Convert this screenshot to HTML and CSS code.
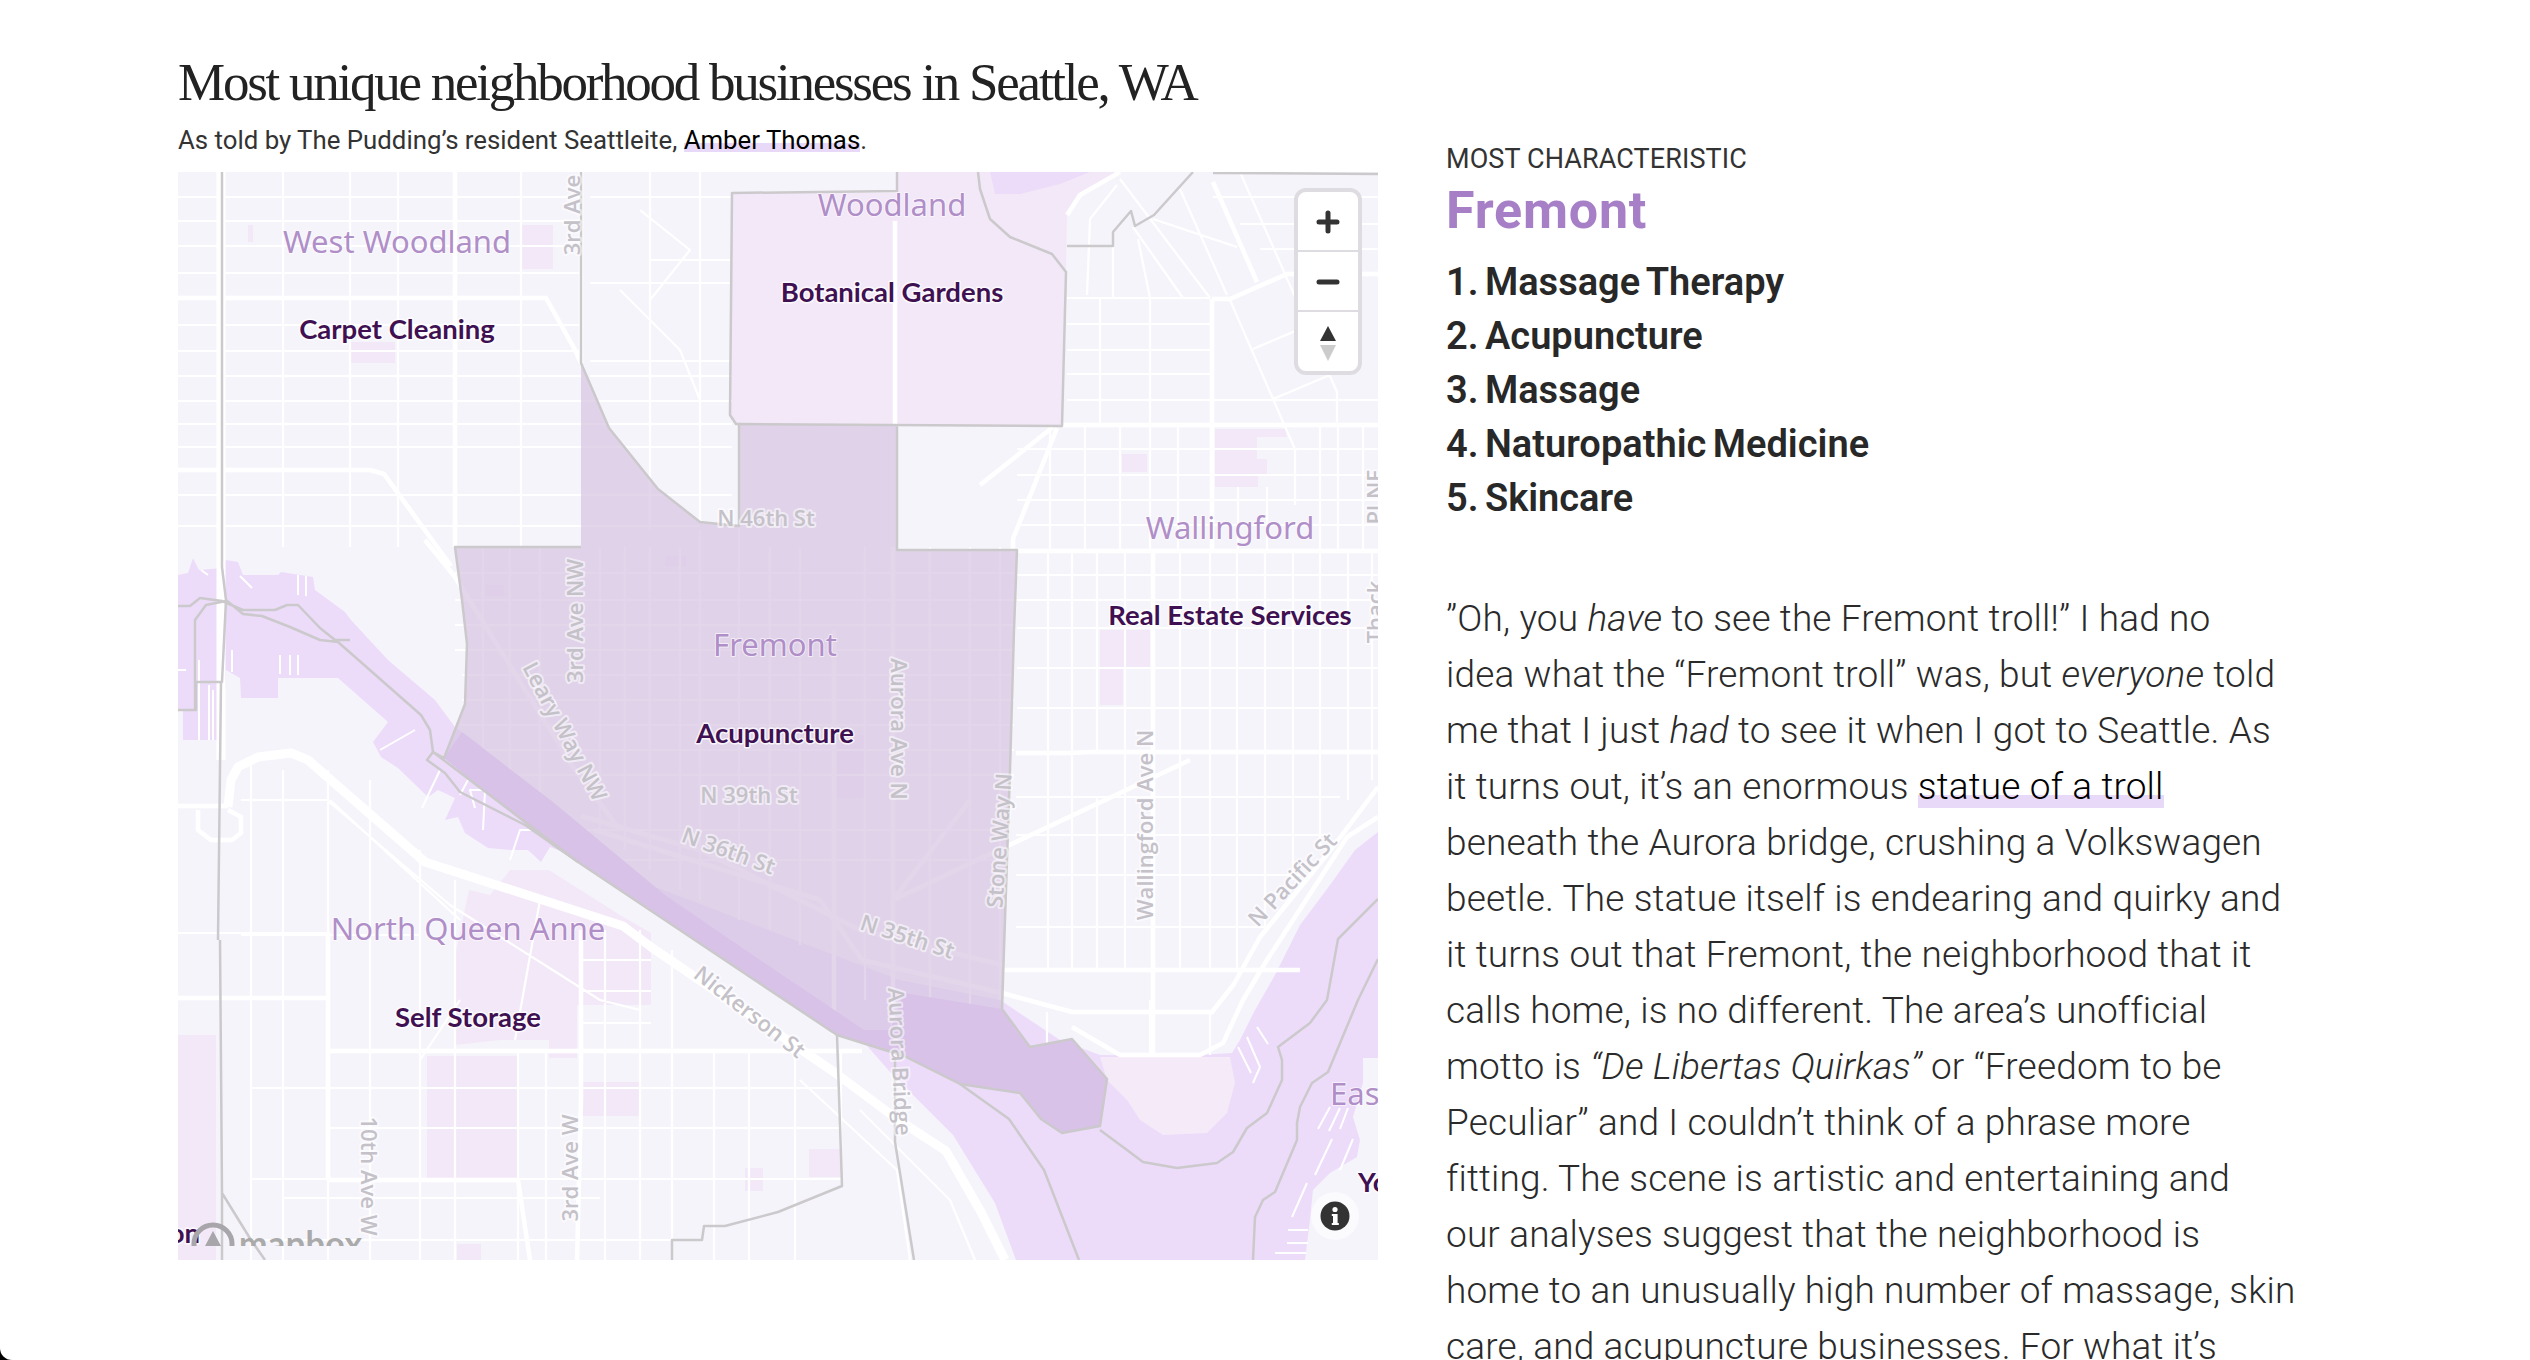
FILE: index.html
```html
<!DOCTYPE html>
<html>
	<head>
		<title>Most unique neighborhood businesses in Seattle, WA</title>
		<meta charset="utf-8"/>
		<link rel="stylesheet" href="styles.css">
	</head>
	<body>
		<div class="page">
			<div class="chart">
				<h1 class="chartTitle">Most unique neighborhood businesses in Seattle, WA</h1>
				<p class="chartSub">As told by The Pudding’s resident Seattleite, <a href="#">Amber Thomas</a>.</p>
				<div class="map">
					<!-- viewBox uses page coordinates so it is easy to check against the screenshot -->
					<svg class="mapArt" viewBox="178 172 1200 1088" width="1200" height="1088">
						<rect class="land" x="178" y="172" width="1200" height="1088"/>

						<!-- parks and green blocks -->
						<path class="park" d="M732 193H897V172H1120L1080 195L1067 215L1066 272L1062 425H736L730 415Z"/>
						<path class="park" d="M520 225h33v44h-33zM351 342h44v21h-44zM248 225h5v17h-5zM1122 454h25v18h-25zM1100 630h50v37h-50zM1100 667h23v38h-23zM427 1056h91v123h-91zM581 1082h60v34h-60zM745 1168h18v23h-18zM809 1149h32v28h-32zM457 1244h24v16h-24zM665 556h21v10h-21zM486 585h18v11h-18zM837 735h28v63h-28z"/>
						<path class="park" d="M1215 429H1285L1287 437H1257V459H1267V475H1258V487H1215Z"/>
						<path class="park" d="M469 890L490 895L510 870H549L620 915L651 933V1005H577V1058H549V1040H500L455 1045V956Z"/>
						<path class="park" d="M178 1035H216V1260H178Z"/>

						<!-- water -->
						<path class="water" d="M990 172H1090L1060 184L1020 194L995 194Z"/>
						<path class="water" d="M178 575L188 573L193 558L199 570L223 568L226 560L238 562L243 575H278L281 572L313 577L315 590L345 612L351 620L388 660L435 700L455 727L480 745L560 830L840 1030L862 1040L890 1072L953 1135L995 1203L1016 1260H1305L1310 1220L1313 1190L1330 1173L1357 1157L1360 1140L1353 1117L1363 1083V1058H1378V832L1355 850L1330 885L1300 925L1275 975L1255 1010L1240 1040L1232 1053L1180 1056L1100 1055L1060 1040L1000 1000L900 980L550 847L541 862L528 850H511L488 848L465 833L458 817L445 820L455 798L438 790L428 797L398 768L381 757L373 742L388 722L338 678H278V698H241L240 678L226 670L223 740H198L196 740H183V710H178Z"/>
						<path class="parkLight" d="M1100 1057H1230L1235 1083L1227 1113L1207 1133L1163 1135L1140 1120L1127 1100L1107 1080Z"/>

						<!-- street grid -->
						<path class="road" d="M178 197H581M178 221H581M178 246H581M178 273H581M178 325H581M178 351H581M178 376H581M178 401H732M178 424H732M178 447H732M178 495H732M178 526H700M590 197H732M650 260H732M590 283H732M590 361H732M590 376H732
							M283 172V547M350 172V547M398 172V547M521 172V547M650 172V530M700 172V522M640 210L690 250L650 300M620 290L680 350L700 400
							M1067 298H1210M1067 324H1212M1067 350H1212M1067 374H1212M1067 400H1378M1100 298V425M1150 298V425M1113 232V298M1090 219L1117 185M1090 219L1087 295M1133 227L1183 298M1138 239L1150 298M1120 179L1210 298M1180 189L1227 295M1240 172L1337 392V422M1230 300L1283 422L1295 449V505M1153 219L1237 247M1273 399L1330 375M1253 349L1300 329M1213 197H1378M1240 224H1378M1260 249H1378
							M1050 425V551M1085 425V551M1120 425V551M1150 425V551M1178 425V551M1238 487V551M1267 487V551M1320 425V551M1338 425V551M1363 425V551M1017 449H1378M1017 475H1378M1017 500H1378M1017 525H1378
							M1048 551V752M1072 551V752M1097 551V752M1125 551V752M1180 551V970M1210 551V970M1237 551V970M1265 551V930M1293 551V880M1320 551V850M1348 551V800M1372 551V780M1017 575H1378M1017 600H1378M1017 628H1378M1017 668H1378M1017 708H1378M1016 797H1340M1016 835H1330M1016 875H1300M1016 927H1270M1048 752V970M1072 752V970M1097 797V970M1125 752V970
							M483 547V780M510 547V800M540 547V820M600 547V830M625 547V850M650 547V870M680 547V890M700 530V900M739 526V920M770 547V930M800 547V945M865 547V1000M930 547V1060M970 547V1080M1000 547V1000M455 573H1014M455 600H1014M455 625H1014M455 650H1014M462 675H1014M462 700H1014M460 725H1014M480 750H1014M505 775H1014M545 830H1010M600 860H1005
							M251 760V1260M283 770V1260M328 770V1260M370 780V1260M420 850V1260M455 880V1260M518 1050V1260M546 1050V1260M605 930V1260M640 930V1260M672 950V1240M714 1051V1260M749 1051V1260M795 1051V1260M841 1051V1150M178 933H328M328 800H241M241 935H420M328 1128H841M251 1088H841M251 1179H841M283 1198H600M251 1240H700M581 960H651M581 991H651M581 1023H651
							M327 800L450 905L600 1000L640 1010M330 800L460 920M540 900L515 1040M460 1000L420 1060M1150 1000V1055M1047 1012V1055M1210 1012V1055"/>

						<!-- arterials -->
						<path class="artery" d="M178 298H546L574 348L581 363M581 172V363M455 172V547M178 470H370L384 474L451 566M1063 425H1378M980 485L1053 427M1013 552V539L1057 428M1017 551H1378M1212 299V551M1153 551V1055M1213 182L1257 282M1212 299H1230L1287 274H1378M1067 215L1080 195L1120 172M581 930V1100L577 1260M178 806H228M198 810V830L211 840H232L241 833V817L228 810M178 998H328M328 1051H862M328 932V1180M328 1180H518L530 1260M1016 753H1070L1090 752H1378M895 221V424"/>

						<path class="artery" d="M425 540L455 577L575 770L620 830M581 816L700 850L860 930L1002 965M595 830L820 900L862 960L1002 993M834 630V1035M893 547V1056M970 800L893 900M1190 760L893 900M1002 993L1072 1012H1212L1234 984L1260 937L1333 847L1378 787M1072 1027L1120 1055H1200L1223 1043L1243 1000L1267 960L1347 837L1378 817M1002 970H1300"/>

						<!-- highway -->
						<path class="highway" d="M221 172V760M228 807L231 780L238 767L258 757L291 753L308 760L425 862L623 926L651 947L834 1072L897 1119L946 1151L981 1212L1005 1260"/>
						<path class="road" d="M800 1080L897 1170L910 1260M860 1110L950 1200L975 1260"/>

						<!-- docks -->
						<path class="dock" d="M201 570L208 575M240 576L252 588M298 575V595M306 576V596M232 650V672M280 655V674M290 655V675M298 655V675M177 670H186M199 660V740M209 685V740M213 690V740M380 750L415 730M422 808L440 770M460 795L468 780M475 808L470 790H485L483 830M510 860L520 830L540 830M530 825L550 840M1257 1027L1268 1044M1247 1037L1260 1067L1253 1083M1238 1047L1251 1073M1330 1107L1318 1129M1340 1108L1329 1131M1348 1108L1340 1129M1332 1139L1315 1175M1353 1139L1340 1170M1307 1183L1292 1217M1288 1230H1308M1287 1243H1308M1275 1253H1306"/>

						<!-- fremont -->
						<path class="fremont" d="M739 424H897V550H1017L1014 630L1010 770L1002 1009L1030 1047L1072 1039L1107 1079L1100 1126L1062 1133L1041 1119L1020 1093L960 1084L904 1056L837 1035L553 846L444 758L455 730L465 704L467 644L462 600L455 547H581V363L609 428L658 489L700 522L739 526Z"/>
						<path class="fremontWater" d="M444 758L462 732L553 802L665 895L760 960L830 1007L864 1030L890 1030L904 993L1002 1009L1030 1047L1072 1039L1107 1079L1100 1126L1062 1133L1041 1119L1020 1093L960 1084L904 1056L837 1035L553 846Z"/>

						<!-- neighborhood boundaries -->
						<path class="edge" d="M897 172V191L732 193L730 415L736 424H739V526L700 522L658 489L609 428L581 363V172M739 424L1062 426L1066 272L1052 254L1010 237L990 219L980 189L978 172M1067 246H1113V232L1131 211L1135 226L1154 215L1193 172M1213 173L1378 174M897 426V550H1017L1014 630L1010 770L1002 1009L1030 1047L1072 1039L1107 1079L1100 1126L1062 1133L1041 1119L1020 1093L960 1084L904 1056L837 1035L578 862L433 752L444 758L455 730L465 704L467 644L462 600L455 547H581"/>
						<path class="edge" d="M222 172V567L226 600L222 682H196V710H178M221 682L218 940M220 940L222 1193V1260M222 1193L251 1240L265 1260M178 606H190L200 598L222 601L243 610H275L287 605H298L320 628L335 640H350M226 600L243 614L262 616L290 627L320 640L338 642L421 715L430 730L433 752L427 760L445 773L460 792L525 825L578 862M226 601L206 605L195 620V710"/>
						<path class="edge" d="M837 1035L842 1186L778 1212L725 1226H704L702 1240H672V1260M895 1058V1142L914 1260M960 1084L1009 1119L1044 1170L1079 1260M1100 1130L1127 1150L1143 1162L1177 1168L1217 1163L1233 1152L1247 1128L1267 1113L1282 1080V1060L1278 1047L1310 1023L1327 1000L1338 939L1378 899M1378 959L1358 1000L1328 1072L1312 1083L1300 1107L1297 1123V1140L1275 1192L1263 1200L1255 1217L1253 1260"/>

						<!-- street names -->
						<text class="street" transform="translate(580 215) rotate(-90)">3rd Ave</text>
						<text class="street" transform="translate(583 621) rotate(-90)">3rd Ave NW</text>
						<text class="street" transform="translate(558 735) rotate(62)">Leary Way NW</text>
						<text class="street" transform="translate(891 729) rotate(90)">Aurora Ave N</text>
						<text class="street" transform="translate(1007 841) rotate(-86)">Stone Way N</text>
						<text class="street" transform="translate(1153 825) rotate(-90)">Wallingford Ave N</text>
						<text class="street" transform="translate(1298 885) rotate(-47)">N Pacific St</text>
						<text class="street" x="766" y="526">N 46th St</text>
						<text class="street" x="749" y="803">N 39th St</text>
						<text class="street" transform="translate(726 858) rotate(20)">N 36th St</text>
						<text class="street" transform="translate(905 944) rotate(18)">N 35th St</text>
						<text class="street" transform="translate(745 1018) rotate(38)">Nickerson St</text>
						<text class="street" transform="translate(892 1062) rotate(87)">Aurora Bridge</text>
						<text class="street" transform="translate(578 1168) rotate(-90)">3rd Ave W</text>
						<text class="street" transform="translate(361 1176) rotate(90)">10th Ave W</text>
						<text class="street" transform="translate(1383 497) rotate(-90)">Pl NE</text>
						<text class="street" transform="translate(1383 612) rotate(-90)">Thack</text>

						<!-- neighborhood names -->
						<text class="hood" x="397" y="253">West Woodland</text>
						<text class="hood" x="892" y="216">Woodland</text>
						<text class="hood" x="1230" y="539">Wallingford</text>
						<text class="hood" x="775" y="656">Fremont</text>
						<text class="hood" x="468" y="940">North Queen Anne</text>
						<text class="hood hoodStart" x="1330" y="1105">Eastlake</text>

						<!-- top business per neighborhood -->
						<text class="biz" x="397" y="339">Carpet Cleaning</text>
						<text class="biz" x="892" y="302">Botanical Gardens</text>
						<text class="biz" x="1230" y="625">Real Estate Services</text>
						<text class="biz" x="775" y="743">Acupuncture</text>
						<text class="biz" x="468" y="1027">Self Storage</text>
						<text class="biz bizStart" x="1358" y="1192">Yoga</text>
						<text class="biz bizEnd" x="200" y="1243">Construction</text>
					</svg>

					<div class="mapControls">
						<button class="mapBtn" aria-label="Zoom in">
							<svg width="24" height="24" viewBox="0 0 24 24"><path class="ctrlStroke" d="M3 12H21M12 3V21"/></svg>
						</button>
						<button class="mapBtn" aria-label="Zoom out">
							<svg width="24" height="24" viewBox="0 0 24 24"><path class="ctrlStroke" d="M3 12H21"/></svg>
						</button>
						<button class="mapBtn" aria-label="Reset bearing">
							<svg width="16" height="36" viewBox="0 0 16 36"><path class="ctrlUp" d="M8 0L16 15H0Z"/><path class="ctrlDown" d="M0 19H16L8 35Z"/></svg>
						</button>
					</div>

					<div class="mapLogo">
						<svg width="44" height="44" viewBox="0 0 44 44"><circle class="logoRing" cx="22" cy="22" r="19"/><path class="logoArrow" d="M22 9L30 24H14Z"/></svg>
						<span class="logoWord">mapbox</span>
					</div>

					<div class="mapInfo">
						<svg width="30" height="30" viewBox="0 0 30 30"><circle class="infoDisc" cx="15" cy="15" r="14.5"/><circle class="infoMark" cx="15" cy="8.5" r="2.6"/><path class="infoMark" d="M11.8 13H17.6V22H18.8V24H11.8V22H13V15H11.8Z"/></svg>
					</div>
				</div>
			</div>

			<div class="story">
				<div class="storyLabel">MOST CHARACTERISTIC</div>
				<h2 class="storyName">Fremont</h2>
				<ol class="storyList">
					<li>1. Massage Therapy</li>
					<li>2. Acupuncture</li>
					<li>3. Massage</li>
					<li>4. Naturopathic Medicine</li>
					<li>5. Skincare</li>
				</ol>
				<p class="storyText">”Oh, you <em>have</em> to see the Fremont troll!” I had no<br>
					idea what the “Fremont troll” was, but <em>everyone</em> told<br>
					me that I just <em>had</em> to see it when I got to Seattle. As<br>
					it turns out, it’s an enormous <a href="#">statue of a troll</a><br>
					beneath the Aurora bridge, crushing a Volkswagen<br>
					beetle. The statue itself is endearing and quirky and<br>
					it turns out that Fremont, the neighborhood that it<br>
					calls home, is no different. The area’s unofficial<br>
					motto is <em>“De Libertas Quirkas”</em> or “Freedom to be<br>
					Peculiar” and I couldn’t think of a phrase more<br>
					fitting. The scene is artistic and entertaining and<br>
					our analyses suggest that the neighborhood is<br>
					home to an unusually high number of massage, skin<br>
					care, and acupuncture businesses. For what it’s</p>
			</div>
		</div>
	</body>
</html>
```

FILE: styles.css
```css
html { background:#000; }
body {
	margin:0;
	color:#2a2a2a;
	font-family:"Roboto", "Liberation Sans", sans-serif;
}
a { color:#000; text-decoration:none; }

.page {
	height:1360px;
	overflow:hidden;
	box-sizing:border-box;
	padding:47px 0 0 178px;
	background:#fff;
	border-bottom-left-radius:12px;
	display:flex;
	gap:68px;
	align-items:flex-start;
}

/* left column */
.chart { width:1200px; flex:none; }
.chartTitle {
	margin:0;
	font-family:"Liberation Serif", serif;
	font-weight:400;
	font-size:53px;
	line-height:70px;
	letter-spacing:-2.25px;
	color:#222;
	white-space:nowrap;
}
.chartSub {
	margin:6px 0 15px;
	font-size:25.8px;
	line-height:34px;
	font-weight:400;
	color:#333;
}
.chartSub a {
	background:linear-gradient(#e8d9f8,#e8d9f8) 0 calc(100% - 3px)/100% 9px no-repeat;
}

/* map */
.map { position:relative; width:1200px; height:1088px; overflow:hidden; }
.mapArt { display:block; }
.land { fill:#f6f4fb; }
.park { fill:#f3e8f8; }
.parkLight { fill:#f5eaf8; }
.water { fill:#ecdcfa; }
.road, .artery, .highway, .dock, .edge { fill:none; stroke-linejoin:round; }
.road { stroke:#fff; stroke-width:2.2; }
.artery { stroke:#fff; stroke-width:4.5; }
.highway { stroke:#fff; stroke-width:9; }
.dock { stroke:#fff; stroke-width:2; }
.edge { stroke:#cbc9cb; stroke-width:2.5; }
.fremont { fill:#d7c5e1; fill-opacity:.7; }
.fremontWater { fill:#d8c2e8; }

.street, .hood, .biz {
	text-anchor:middle;
	paint-order:stroke;
	stroke-linejoin:round;
}
.street {
	font:600 22px "Open Sans", sans-serif;
	fill:#c4c1c8;
	stroke:rgba(255,255,255,.55);
	stroke-width:4px;
}
.hood {
	font:400 31px "Noto Sans", sans-serif;
	fill:#b08fc8;
	stroke:rgba(255,255,255,.6);
	stroke-width:2px;
}
.biz {
	font:700 27.5px "Lato", sans-serif;
	fill:#3f1152;
	stroke:rgba(255,255,255,.8);
	stroke-width:3px;
}
.hoodStart, .bizStart { text-anchor:start; }
.bizEnd { text-anchor:end; }

.mapControls {
	position:absolute;
	top:16px;
	right:16px;
	width:60px;
	border:4px solid #dedce1;
	border-radius:12px;
	background:#fff;
	overflow:hidden;
}
.mapBtn {
	display:flex;
	align-items:center;
	justify-content:center;
	width:60px;
	height:60px;
	padding:2px 0 0;
	border:0;
	border-bottom:2px solid #dedce1;
	background:none;
}
.mapBtn:last-child { border-bottom:0; height:59px; padding-top:5px; }
.ctrlStroke { stroke:#333; stroke-width:5; stroke-linecap:round; fill:none; }
.ctrlUp { fill:#333; }
.ctrlDown { fill:#ccc; }

.mapLogo {
	position:absolute;
	left:13px;
	top:1050px;
	height:24px;
	overflow:hidden;
	display:flex;
	gap:4px;
	color:#aaa;
}
.logoRing { fill:none; stroke:#a8a6aa; stroke-width:5; }
.logoArrow { fill:#a8a6aa; }
.logoWord {
	font:700 34px/50px "Lato", sans-serif;
	margin-top:-4px;
	letter-spacing:.5px;
}

.mapInfo {
	position:absolute;
	left:1133px;
	top:1020px;
	padding:9px;
	border-radius:50%;
	background:rgba(255,255,255,.5);
	line-height:0;
}
.infoDisc { fill:#333; }
.infoMark { fill:#fff; }

/* right column */
.story { width:900px; flex:none; padding-top:97px; }
.storyLabel { font-size:27px; line-height:30px; font-weight:400; letter-spacing:.1px; color:#333; }
.storyName {
	margin:7px 0 14px;
	font-size:52px;
	line-height:60px;
	letter-spacing:.8px;
	font-weight:700;
	color:#a77fc6;
}
.storyList {
	list-style:none;
	margin:0;
	padding:0;
	font-size:38px;
	line-height:54px;
	font-weight:600;
	word-spacing:-3px;
	color:#282828;
}
.storyText {
	margin:66px 0 0;
	font-size:37px;
	line-height:56px;
	letter-spacing:.15px;
	font-weight:300;
	white-space:nowrap;
}
.storyText a {
	background:linear-gradient(#e8d9f8,#e8d9f8) 0 100%/100% 13px no-repeat;
}
```
